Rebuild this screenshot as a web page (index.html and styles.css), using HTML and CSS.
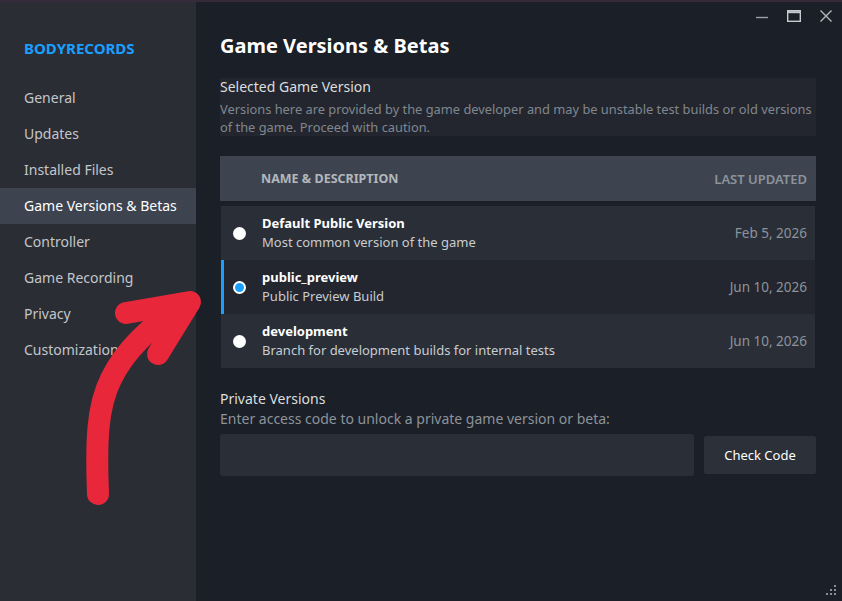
FILE: index.html
```html
<!DOCTYPE html>
<html lang="en">
<head>
    <meta charset="UTF-8">
    <meta name="viewport" content="width=device-width, initial-scale=1.0">
    <title>Game Versions &amp; Betas</title>
    <link rel="stylesheet" href="styles.css">
</head>
<body>

    <div class="window">
        <div class="sidebar">
            <div class="brand">BODYRECORDS</div>
            <ul class="nav">
                <li>General</li>
                <li>Updates</li>
                <li>Installed Files</li>
                <li class="active">Game Versions &amp; Betas</li>
                <li>Controller</li>
                <li>Game Recording</li>
                <li>Privacy</li>
                <li>Customization</li>
            </ul>
        </div>

        <div class="main">
            <div class="controls">
                <svg width="14" height="14" viewBox="0 0 14 14"><path d="M1 8.5h12" stroke="#9ba0a6" stroke-width="1.4"/></svg>
                <svg width="14" height="14" viewBox="0 0 14 14"><rect x="0.7" y="1.7" width="12.6" height="10.6" fill="none" stroke="#c7cace" stroke-width="1.4"/><path d="M0.7 3.2h12.6" stroke="#c7cace" stroke-width="2"/></svg>
                <svg width="14" height="14" viewBox="0 0 14 14"><path d="M1.5 1.5l11 11M12.5 1.5l-11 11" stroke="#b4b8bd" stroke-width="1.4"/></svg>
            </div>

            <h1>Game Versions &amp; Betas</h1>

            <div class="notice">
                <h3>Selected Game Version</h3>
                <p>Versions here are provided by the game developer and may be unstable test builds or old versions of the game. Proceed with caution.</p>
            </div>

            <div class="table-head">
                <span>Name &amp; Description</span>
                <span>Last Updated</span>
            </div>

            <div class="rows">
                <div class="row">
                    <span class="radio"></span>
                    <div class="info">
                        <div class="name">Default Public Version</div>
                        <div class="desc">Most common version of the game</div>
                    </div>
                    <div class="date">Feb 5, 2026</div>
                </div>
                <div class="row selected">
                    <span class="radio"></span>
                    <div class="info">
                        <div class="name">public_preview</div>
                        <div class="desc">Public Preview Build</div>
                    </div>
                    <div class="date">Jun 10, 2026</div>
                </div>
                <div class="row">
                    <span class="radio"></span>
                    <div class="info">
                        <div class="name">development</div>
                        <div class="desc">Branch for development builds for internal tests</div>
                    </div>
                    <div class="date">Jun 10, 2026</div>
                </div>
            </div>

            <div class="private">
                <h3>Private Versions</h3>
                <p>Enter access code to unlock a private game version or beta:</p>
                <div class="code-form">
                    <input type="text">
                    <button>Check Code</button>
                </div>
            </div>
        </div>

        <!-- resize grip -->
        <svg class="grip" width="16" height="16" viewBox="0 0 16 16">
            <rect x="11" y="2" width="2" height="2" fill="#8a8f96"/>
            <rect x="7" y="6" width="2" height="2" fill="#8a8f96"/>
            <rect x="11" y="6" width="2" height="2" fill="#8a8f96"/>
            <rect x="3" y="10" width="2" height="2" fill="#8a8f96"/>
            <rect x="7" y="10" width="2" height="2" fill="#8a8f96"/>
            <rect x="11" y="10" width="2" height="2" fill="#8a8f96"/>
        </svg>

        <!-- hand drawn arrow -->
        <svg class="arrow" width="842" height="601" viewBox="0 0 842 601">
            <g fill="none" stroke="#e8283a" stroke-width="22" stroke-linecap="round" stroke-linejoin="round">
                <path d="M98 494 C96 442 97 407 111 379 C124 352 150 325 186 304"/>
                <path d="M126 313 L190 302 L158 354"/>
            </g>
        </svg>
    </div>

</body>
</html>
```

FILE: styles.css
```css
* {
    margin: 0;
    padding: 0;
    box-sizing: border-box;
}

body {
    font-family: "Noto Sans", "Open Sans", sans-serif;
    background-color: #1b1f27;
    overflow: hidden;
}

.window {
    position: relative;
    display: flex;
    width: 842px;
    height: 601px;
    border-top: 2px solid #35293a;
    background-color: #1b1f27;
}

.sidebar {
    width: 196px;
    background-color: #2a2d34;
    padding-top: 36px;
}

.brand {
    padding-left: 24px;
    line-height: 20px;
    font-size: 15px;
    font-weight: bold;
    color: #1a9fff;
    margin-bottom: 22px;
}

.nav {
    list-style: none;
}

.nav li {
    height: 36px;
    line-height: 36px;
    padding-left: 24px;
    font-size: 14px;
    color: #c3c6ca;
}

.nav li.active {
    background-color: #3d4450;
    color: #ffffff;
}

.main {
    flex: 1;
    padding: 0 26px 0 24px;
}

.controls {
    height: 28px;
    display: flex;
    justify-content: flex-end;
    align-items: center;
    gap: 18px;
    margin-right: -17px;
}

h1 {
    font-size: 20px;
    line-height: 32px;
    color: #ffffff;
    margin-bottom: 16px;
}

.notice {
    background-color: #23262e;
}

.notice h3,
.private h3 {
    font-size: 14px;
    font-weight: normal;
    line-height: 18px;
    color: #dcdedf;
}

.notice p {
    margin-top: 4px;
    font-size: 12.85px;
    line-height: 18px;
    color: #80868e;
}

.table-head {
    margin-top: 20px;
    height: 45px;
    display: flex;
    justify-content: space-between;
    align-items: center;
    padding: 0 9px 0 41px;
    background-color: #3d4450;
    font-size: 12.5px;
    font-weight: bold;
    text-transform: uppercase;
    color: #b3b7bc;
}

.table-head span:last-child {
    font-size: 13px;
    font-weight: 600;
    color: #8d939a;
}

.rows {
    margin-top: 5px;
    padding: 0 1px;
}

.row {
    display: flex;
    align-items: center;
    height: 54px;
    padding: 0 8px 0 9px;
    background-color: #2a2e37;
    border-left: 3px solid transparent;
}

.row.selected {
    background-color: #23262e;
    border-left-color: #1a9fff;
}

.radio {
    width: 13px;
    height: 13px;
    border-radius: 50%;
    background-color: #ffffff;
    margin-right: 16px;
}

.row.selected .radio {
    background-color: #1a9fff;
    border: 2px solid #ffffff;
}

.info {
    flex: 1;
}

.name {
    font-size: 13px;
    font-weight: bold;
    line-height: 19px;
    color: #ffffff;
}

.desc {
    font-size: 13px;
    line-height: 19px;
    color: #c9ccd0;
}

.date {
    font-size: 13.5px;
    color: #8d939a;
}

.private {
    margin-top: 21px;
}

.private h3 {
    line-height: 20px;
}

.private p {
    font-size: 14px;
    line-height: 20px;
    color: #8d939a;
}

.code-form {
    display: flex;
    align-items: center;
    gap: 10px;
    margin-top: 5px;
}

.code-form input {
    flex: 1;
    height: 42px;
    border: none;
    border-radius: 3px;
    background-color: #2a2e37;
}

.code-form button {
    width: 112px;
    height: 38px;
    border: none;
    border-radius: 2px;
    background-color: #2c3038;
    color: #ffffff;
    font-family: inherit;
    font-size: 13px;
}

.grip {
    position: absolute;
    right: 3px;
    bottom: 2px;
}

.arrow {
    position: absolute;
    left: 0;
    top: -2px;
    pointer-events: none;
}
```
